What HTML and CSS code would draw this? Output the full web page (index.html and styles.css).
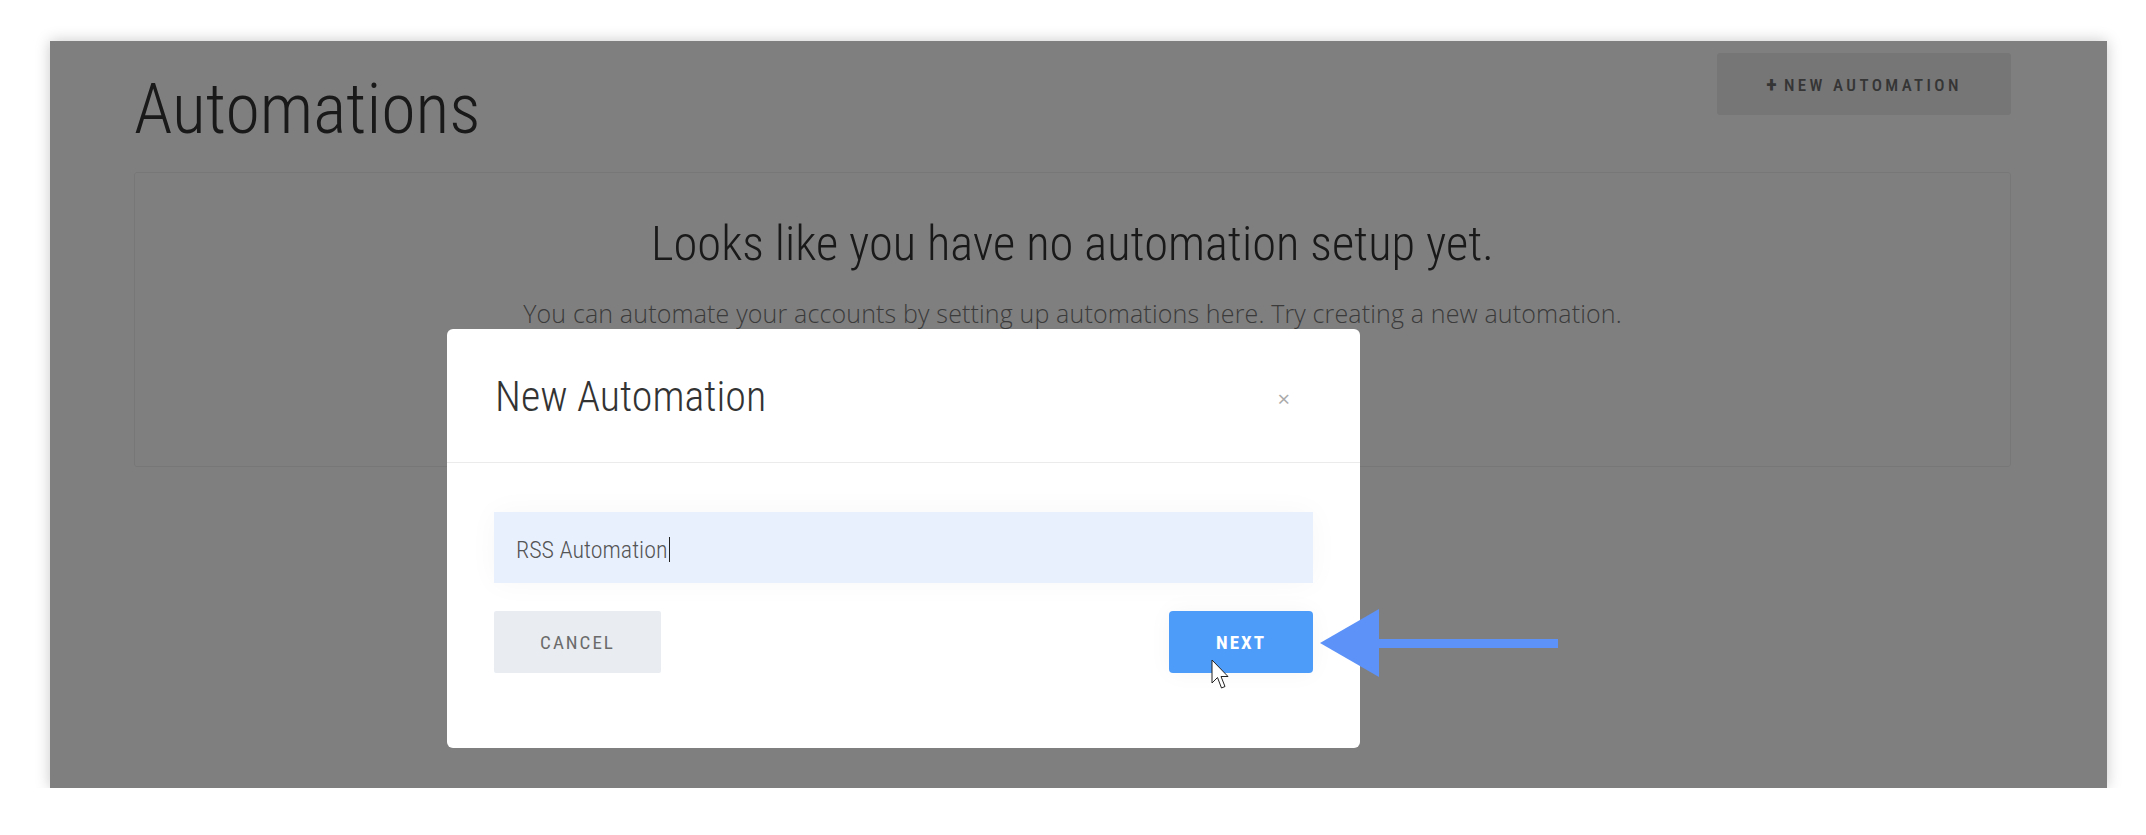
FILE: index.html
```html
<!DOCTYPE html>
<html lang="en">
  <head>
    <meta charset="UTF-8" />
    <meta name="viewport" content="width=device-width, initial-scale=1.0" />
    <title>Automations</title>
    <link rel="stylesheet" href="styles.css">
  </head>
  <body>
    <div class="frame">
      <div class="page">
        <div class="page-header">
          <h1>Automations</h1>
          <button class="new-btn"><span class="plus">+</span> NEW AUTOMATION</button>
        </div>
        <div class="empty-state">
          <h3>Looks like you have no automation setup yet.</h3>
          <p>You can automate your accounts by setting up automations here. Try creating a new automation.</p>
        </div>
      </div>

      <div class="overlay">
        <div class="modal">
          <div class="modal-header">
            <h2>New Automation</h2>
            <span class="close">&times;</span>
          </div>
          <div class="modal-body">
            <div class="field"><span>RSS Automation</span><span class="caret"></span></div>
            <div class="actions">
              <button class="cancel-btn">CANCEL</button>
              <button class="next-btn">NEXT</button>
            </div>
          </div>
        </div>
      </div>

      <!-- annotation arrow pointing at the next button -->
      <svg class="arrow" width="238" height="68" viewBox="0 0 238 68">
        <polygon points="0,34 59,0 59,68" fill="#5d92f9" />
        <rect x="58" y="30" width="180" height="9" fill="#5d92f9" />
      </svg>

      <svg class="cursor" width="18" height="32" viewBox="0 0 18 32">
        <path d="M1 1 L1 24 L6.5 18.5 L10.5 29 L14 27.5 L10 17.5 L17 17.5 Z" fill="#fff" stroke="#222" stroke-width="1" stroke-linejoin="round" />
      </svg>
    </div>
  </body>
</html>
```
FILE: styles.css
```css
body {
  margin: 0;
  background-color: #fff;
  font-family: "Roboto Condensed", Roboto, sans-serif;
}
.frame {
  position: relative;
  width: 2057px;
  height: 747px;
  margin: 41px 0 0 50px;
  background-color: #fff;
  box-shadow: 0 0 14px rgba(0, 0, 0, 0.22);
  overflow: hidden;
}
.page {
  padding: 12px 96px 0 84px;
}
.page-header {
  display: flex;
  justify-content: space-between;
  align-items: flex-start;
}
.page-header h1 {
  margin: 21px 0 0 0;
  font-size: 70px;
  font-weight: 300;
  line-height: 1;
  color: #333;
}
.new-btn {
  width: 294px;
  height: 62px;
  border: none;
  border-radius: 3px;
  background-color: #ececec;
  color: #6a6a6a;
  font-family: "Roboto Condensed", Roboto, sans-serif;
  font-size: 17px;
  font-weight: 500;
  letter-spacing: 3.4px;
}
.new-btn .plus {
  font-weight: 700;
  font-size: 22px;
  letter-spacing: 0;
  vertical-align: -1px;
}
.empty-state {
  margin-top: 28px;
  padding: 43px 20px 136px;
  border: 1px solid #efefef;
  border-radius: 3px;
  text-align: center;
}
.empty-state h3 {
  margin: 0;
  font-size: 48.5px;
  font-weight: 300;
  line-height: 1.16;
  color: #333;
}
.empty-state p {
  margin: 25px 0 0 0;
  font-family: "Open Sans", sans-serif;
  font-size: 25px;
  font-weight: 300;
  letter-spacing: 0.15px;
  line-height: 1.3;
  color: #777;
}
.overlay {
  position: absolute;
  top: 0;
  left: 0;
  right: 0;
  bottom: 0;
  padding: 288px 0 0 397px;
  background-color: rgba(0, 0, 0, 0.5);
}
.modal {
  width: 913px;
  background-color: #fff;
  border-radius: 6px;
}
.modal-header {
  box-sizing: border-box;
  height: 134px;
  padding: 47px 70px 0 48px;
  display: flex;
  justify-content: space-between;
  align-items: flex-start;
  border-bottom: 1px solid #ebebeb;
}
.modal-header h2 {
  margin: 0;
  font-size: 42px;
  font-weight: 300;
  line-height: 1;
  color: #333;
}
.close {
  margin-top: 2px;
  font-family: "Open Sans", sans-serif;
  font-size: 22px;
  line-height: 40px;
  color: #aaa;
}
.modal-body {
  padding: 49px 47px 75px;
}
.field {
  box-sizing: border-box;
  height: 71px;
  padding: 4px 22px 0;
  display: flex;
  align-items: center;
  background-color: #e8f0fe;
  box-shadow: 0 0 30px rgba(0, 0, 0, 0.035);
  font-size: 24px;
  font-weight: 300;
  color: #555;
}
.caret {
  display: inline-block;
  width: 1px;
  height: 25px;
  margin-left: 1px;
  background-color: #222;
}
.actions {
  margin-top: 28px;
  display: flex;
  justify-content: space-between;
}
.actions button {
  height: 62px;
  border: none;
  font-family: "Roboto Condensed", Roboto, sans-serif;
  font-size: 19px;
  letter-spacing: 2px;
  cursor: pointer;
}
.cancel-btn {
  width: 167px;
  border-radius: 2px;
  background-color: #e9ecf1;
  color: #6b6b6b;
  font-weight: 400;
}
.next-btn {
  width: 144px;
  border-radius: 4px;
  background-color: #4d9cfa;
  color: #fff;
  font-weight: 700;
  box-shadow: 0 0 24px rgba(0, 0, 0, 0.04);
}
.arrow {
  position: absolute;
  left: 1270px;
  top: 568px;
}
.cursor {
  position: absolute;
  left: 1161px;
  top: 618px;
}
```
